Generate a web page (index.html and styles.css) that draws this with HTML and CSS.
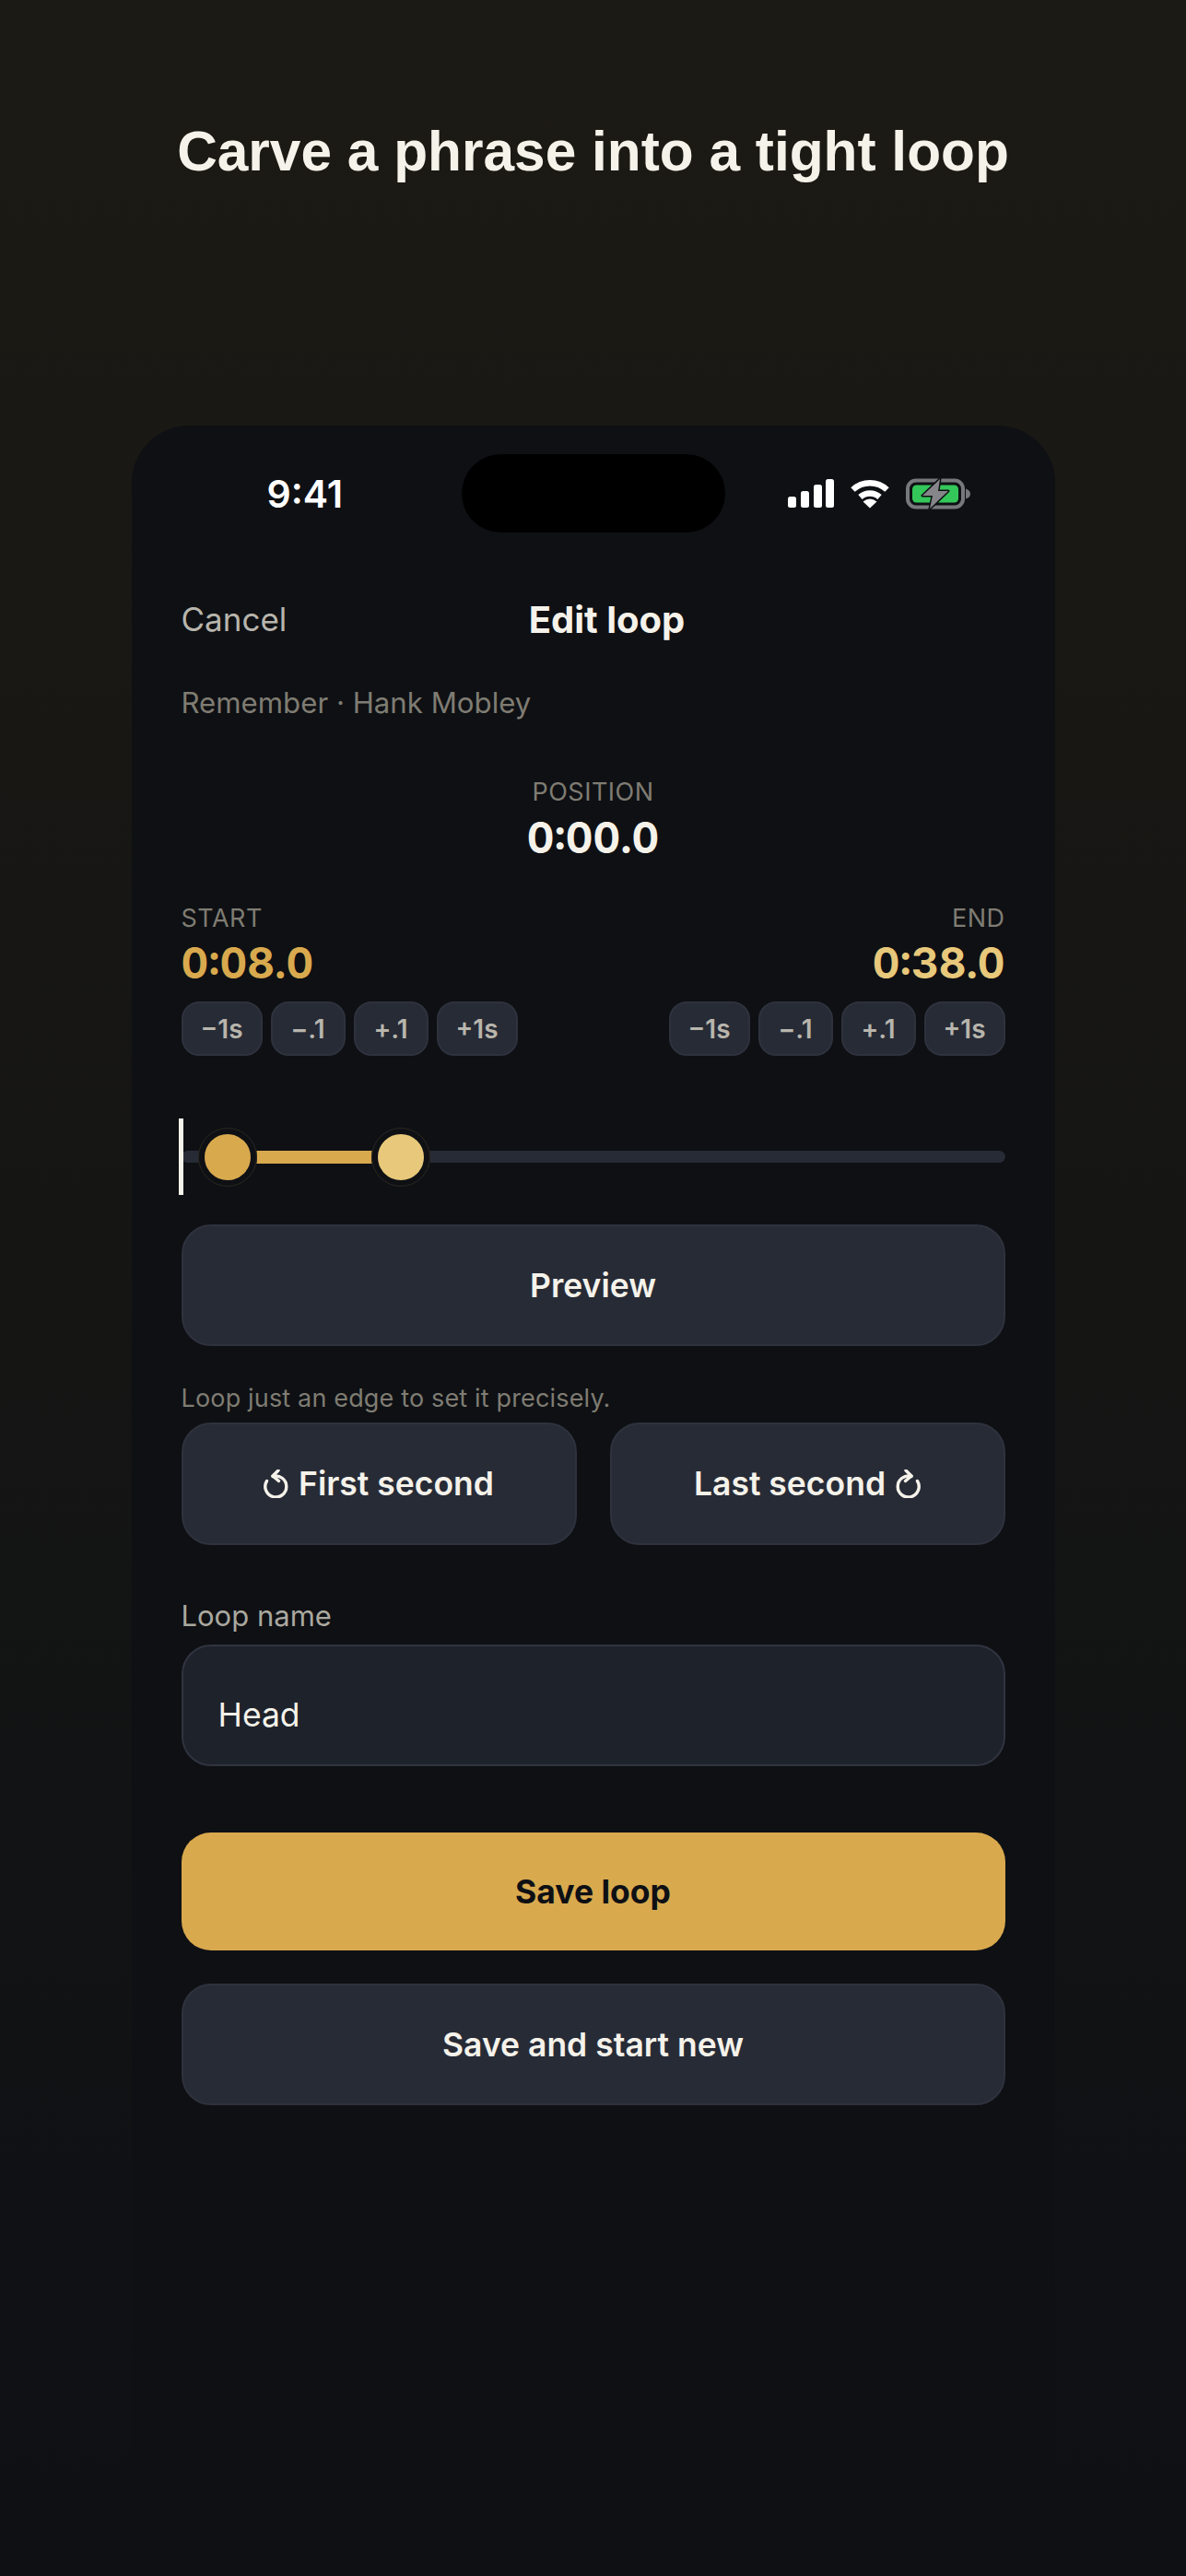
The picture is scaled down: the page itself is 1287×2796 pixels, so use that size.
FILE: index.html
```html
<!DOCTYPE html>
<html lang="en">
<head>
<meta charset="utf-8">
<title>Edit loop</title>
<link rel="stylesheet" href="styles.css">
</head>
<body>
<h1 class="headline">Carve a phrase into a tight loop</h1>
<main class="phone">
  <div class="status">
    <span class="time">9:41</span>
    <div class="island"></div>
    <div class="status-icons">
      <svg class="signal" width="50" height="31" viewBox="0 0 50 31"><rect x="0" y="19" width="9" height="12" rx="2.5"/><rect x="14" y="13" width="9" height="18" rx="2.5"/><rect x="28" y="6" width="9" height="25" rx="2.5"/><rect x="41" y="0" width="9" height="31" rx="2.5"/></svg>
      <svg class="wifi" width="44" height="32" viewBox="0 0 44 32"><path d="M3.5 11.5 A27 27 0 0 1 40.5 11.5"/><path d="M11.5 19.5 A15.5 15.5 0 0 1 32.5 19.5"/><path class="wedge" d="M22 31.5 L14.5 24.5 Q22 18.5 29.5 24.5 Z"/></svg>
      <svg width="70" height="34" viewBox="0 0 70 34"><rect class="batt-shell" x="2" y="2.5" width="60" height="29" rx="9"/><rect class="batt-fill" x="7" y="7.5" width="50" height="19" rx="4.5"/><path class="batt-nub" d="M65 11.5 q5 1.5 5 5.5 t-5 5.5 Z"/><path class="batt-bolt" d="M37 1 L18 19 H29 L26 33 L46 14 H35 Z"/></svg>
    </div>
  </div>

  <header class="nav">
    <span class="cancel">Cancel</span>
    <span class="nav-title">Edit loop</span>
    <span class="nav-spacer"></span>
  </header>

  <p class="track-name">Remember · Hank Mobley</p>

  <div class="position">
    <div class="caps">POSITION</div>
    <div class="time-value white">0:00.0</div>
  </div>

  <div class="edges">
    <section class="edge">
      <div class="caps">START</div>
      <div class="time-value gold">0:08.0</div>
      <div class="nudges">
        <button class="nudge wide">−1s</button>
        <button class="nudge">−.1</button>
        <button class="nudge">+.1</button>
        <button class="nudge wide">+1s</button>
      </div>
    </section>
    <section class="edge right">
      <div class="caps">END</div>
      <div class="time-value light-gold">0:38.0</div>
      <div class="nudges">
        <button class="nudge wide">−1s</button>
        <button class="nudge">−.1</button>
        <button class="nudge">+.1</button>
        <button class="nudge wide">+1s</button>
      </div>
    </section>
  </div>

  <div class="slider">
    <div class="track"></div>
    <div class="range"></div>
    <div class="playhead"></div>
    <div class="thumb thumb-start"></div>
    <div class="thumb thumb-end"></div>
  </div>

  <button class="btn preview">Preview</button>

  <p class="hint">Loop just an edge to set it precisely.</p>
  <div class="edge-loops">
    <button class="btn loop-btn">
      <svg class="loop-icon" width="27" height="31" viewBox="0 0 27 31"><path d="M10 7.5 A11.5 11.5 0 1 1 3.5 12.5"/><path d="M16 1 L10 7 L16.5 12.5"/></svg>
      <span>First second</span>
    </button>
    <button class="btn loop-btn">
      <span>Last second</span>
      <svg class="loop-icon" width="27" height="31" viewBox="0 0 27 31"><path d="M17 7.5 A11.5 11.5 0 1 0 23.5 12.5"/><path d="M11 1 L17 7 L10.5 12.5"/></svg>
    </button>
  </div>

  <div class="field-label">Loop name</div>
  <div class="field">Head</div>

  <button class="btn save">Save loop</button>
  <button class="btn save-new">Save and start new</button>
</main>
</body>
</html>
```
FILE: styles.css
```css
* { box-sizing: border-box; }
html, body { margin: 0; height: 2796px; }
body {
  overflow: hidden;
  display: flex;
  flex-direction: column;
  align-items: center;
  background: linear-gradient(180deg, #1c1a14 0%, #0e1014 100%);
  font-family: Inter, "Liberation Sans", sans-serif;
  color: #f5f2ea;
}
.headline {
  margin: 0;
  height: 462px;
  padding-top: 129px;
  font: 700 60.4px/70px "Liberation Sans", Arial, sans-serif;
  color: #f5f2ea;
  text-align: center;
}
.phone {
  position: relative;
  flex: 1;
  width: 1002px;
  padding: 0 54px;
  background: #0e1014;
  border-radius: 62px 62px 0 0;
}
.status {
  position: relative;
  display: flex;
  justify-content: space-between;
  align-items: center;
  height: 85px;
  margin: 31px 38px 0 93px;
}
.time { font-size: 41px; font-weight: 600; color: #fff; }
.island {
  position: absolute;
  left: 211px;
  top: 0;
  width: 286px;
  height: 85px;
  border-radius: 43px;
  background: #000;
}
.status-icons { display: flex; align-items: center; gap: 17px; }
.signal { fill: #fff; }
.wifi path { fill: none; stroke: #fff; stroke-width: 6.5; }
.wifi .wedge { fill: #fff; stroke: none; }
.batt-shell { fill: none; stroke: #77787b; stroke-width: 4; }
.batt-fill { fill: #34c759; }
.batt-nub { fill: #77787b; }
.batt-bolt { fill: #86868a; stroke: #0e1014; stroke-width: 3; paint-order: stroke; stroke-linejoin: round; }

.nav { display: flex; justify-content: space-between; align-items: center; height: 44px; margin-top: 72px; }
.cancel { font-size: 35px; color: #b8b5ac; width: 165px; }
.nav-title { font-size: 40px; font-weight: 700; color: #f5f2ea; }
.nav-spacer { width: 135px; }
.track-name { margin: 49px 0 0; font-size: 31.2px; line-height: 40px; color: #7f7c72; }
.position { margin-top: 59px; text-align: center; }
.caps { font-size: 27px; line-height: 36px; color: #7f7c72; letter-spacing: 0.5px; }
.time-value { font-size: 46px; line-height: 56px; font-weight: 700; font-variant-numeric: tabular-nums; }
.position .time-value { margin-top: 3px; }
.white { color: #f5f2ea; }
.gold { color: #d9a94e; }
.light-gold { color: #e8c87a; }

.edges { display: flex; justify-content: space-between; margin-top: 42px; }
.edge .time-value { margin-top: 4px; line-height: 52px; }
.edge.right { text-align: right; }
.nudges { display: flex; gap: 9px; margin-top: 16px; }
.nudge {
  width: 81px;
  height: 59px;
  padding: 0;
  border: 2px solid #2e323d;
  border-radius: 19px;
  background: #272b36;
  color: #b8b5ac;
  font: 600 28px Inter, sans-serif;
}
.nudge.wide { width: 88px; }

.slider { position: relative; height: 83px; margin-top: 68px; }
.track { position: absolute; left: 0; right: 0; top: 35px; height: 13px; border-radius: 7px; background: #272b36; }
.range { position: absolute; left: 50px; width: 188px; top: 35px; height: 14px; background: #d9a94e; }
.playhead { position: absolute; left: -3px; top: 0; width: 5px; height: 83px; background: #f5f2ea; }
.thumb {
  position: absolute;
  top: 10px;
  width: 64px;
  height: 64px;
  border: 7px solid #0e1014;
  border-radius: 50%;
  outline: 1px solid #2c2820;
  outline-offset: -1px;
}
.thumb-start { left: 18px; background: #d9a94e; }
.thumb-end { left: 206px; background: #e8c87a; }

.btn {
  display: flex;
  align-items: center;
  justify-content: center;
  width: 100%;
  padding: 0;
  border: 2px solid #2e323d;
  background: #272b36;
  color: #f5f2ea;
  border-radius: 32px;
  font: 600 35.5px Inter, sans-serif;
}
.preview { height: 132px; margin-top: 32px; }
.hint { margin: 40px 0 0; font-size: 27px; line-height: 34px; color: #7f7c72; letter-spacing: 0.16px; }
.edge-loops { display: grid; grid-template-columns: 1fr 1fr; gap: 36px; margin-top: 9px; }
.loop-btn { height: 133px; gap: 11px; }
.loop-icon path { fill: none; stroke: #f5f2ea; stroke-width: 3.4; stroke-linecap: round; stroke-linejoin: round; }
.field-label { margin-top: 59px; font-size: 31px; line-height: 36px; color: #aaa89f; }
.field {
  height: 132px;
  margin-top: 13px;
  padding: 20px 0 0 38px;
  display: flex;
  align-items: center;
  border: 2px solid #30343f;
  border-radius: 32px;
  background: #1e222b;
  font-size: 35.5px;
  color: #f5f2ea;
}
.save { height: 128px; margin-top: 72px; background: #d9a94e; border: 0; color: #0e1014; font-weight: 700; }
.save-new { height: 132px; margin-top: 36px; }
```
